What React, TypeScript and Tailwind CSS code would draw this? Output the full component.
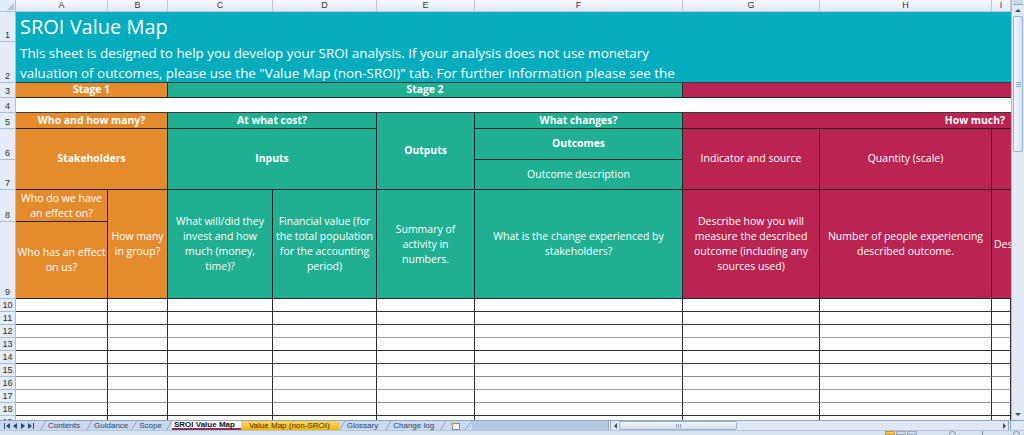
import type { ReactNode } from "react";

const cols = "grid-cols-[16px_92px_60px_105px_104px_98px_208px_137px_172px_19px]";

const orange = "bg-[#e48b2d]";
const green = "bg-[#20af93]";
const red = "bg-[#b92451]";
const teal = "bg-[#03adbd]";

const letters = [
  { l: "A", c: "col-start-2" },
  { l: "B", c: "col-start-3" },
  { l: "C", c: "col-start-4" },
  { l: "D", c: "col-start-5" },
  { l: "E", c: "col-start-6" },
  { l: "F", c: "col-start-7" },
  { l: "G", c: "col-start-8" },
  { l: "H", c: "col-start-9" },
  { l: "I", c: "col-start-10" },
];

const headRows = [
  { n: 1, r: "row-start-2" },
  { n: 2, r: "row-start-3" },
  { n: 3, r: "row-start-4" },
  { n: 4, r: "row-start-5" },
  { n: 5, r: "row-start-6" },
  { n: 6, r: "row-start-7" },
  { n: 7, r: "row-start-8" },
  { n: 8, r: "row-start-9" },
  { n: 9, r: "row-start-10" },
];

// bottom line of each empty row, some print darker than others
const rowLines = [
  "border-b-[#2e2e2e]",
  "border-b-[#3a3a3a]",
  "border-b-[#9c9c9c]",
  "border-b-[#2e2e2e]",
  "border-b-[#3a3a3a]",
  "border-b-[#8f8f8f]",
  "border-b-[#9c9c9c]",
  "border-b-[#8f8f8f]",
  "border-b-[#2e2e2e]",
  "border-b-[#9c9c9c]",
];

function Cell({ className = "", children }: { className?: string; children?: ReactNode }) {
  return (
    <div
      className={`flex items-center justify-center text-center text-white border-r border-b border-[#262626] overflow-hidden whitespace-nowrap ${className}`}
    >
      {children}
    </div>
  );
}

function RowNum({ n, className = "" }: { n: number; className?: string }) {
  return (
    <div
      className={`bg-[#e4ecf7] border-r border-b border-[#a9bdd6] flex items-end justify-center text-[9px] leading-none pb-[1px] text-[#2c2c2c] font-['Liberation_Sans',Arial,sans-serif] ${className}`}
    >
      {n}
    </div>
  );
}

const Sheet = () => {
  return (
    <div className="flex-1 h-full overflow-hidden flex flex-col">
      <div className={`grid ${cols} grid-rows-[12px_30px_41px_15px_15px_16px_31px_30px_32px_77px] shrink-0`}>
        <div className="col-start-1 row-start-1 bg-[#e4ecf7] border-r border-b border-[#a9bdd6] flex items-end justify-end p-[1px]">
          <div className="w-0 h-0 border-l-[7px] border-l-transparent border-b-[7px] border-b-[#b3c3d8]" />
        </div>
        {letters.map((x) => (
          <div
            key={x.l}
            className={`${x.c} row-start-1 bg-linear-to-b from-[#f8fafd] to-[#e2e9f3] border-r border-b border-[#b7c8dc] flex items-center justify-center text-[9px] leading-none text-[#333] font-['Liberation_Sans',Arial,sans-serif]`}
          >
            {x.l}
          </div>
        ))}
        {headRows.map((x) => (
          <RowNum key={x.n} n={x.n} className={`col-start-1 ${x.r}`} />
        ))}

        {/* title band */}
        <div className={`col-start-2 col-span-9 row-start-2 ${teal} text-white text-[20px] leading-[30px] pl-[4px] whitespace-nowrap overflow-hidden`}>
          SROI Value Map
        </div>
        <div className={`col-start-2 col-span-9 row-start-3 ${teal} text-white text-[13.4px] leading-[20px] pl-[4px] pt-px whitespace-nowrap overflow-hidden border-b border-[#2b3f42]`}>
          This sheet is designed to help you develop your SROI analysis. If your analysis does not use monetary
          <br />
          valuation of outcomes, please use the "Value Map (non-SROI)" tab. For further information please see the
        </div>

        {/* stages */}
        <Cell className={`col-start-2 col-span-2 row-start-4 ${orange} text-[10.4px] font-bold`}>Stage 1</Cell>
        <Cell className={`col-start-4 col-span-4 row-start-4 ${green} text-[10.4px] font-bold`}>Stage 2</Cell>
        <Cell className={`col-start-8 col-span-3 row-start-4 ${red} border-r-0`} />
        <div className="col-start-2 col-span-9 row-start-5 bg-white border-b border-[#3a3a3a]" />

        {/* questions */}
        <Cell className={`col-start-2 col-span-2 row-start-6 ${orange} text-[10.4px] font-bold`}>Who and how many?</Cell>
        <Cell className={`col-start-4 col-span-2 row-start-6 ${green} text-[10.4px] font-bold`}>At what cost?</Cell>
        <Cell className={`col-start-6 row-start-6 row-span-3 ${green} text-[10.4px] font-bold`}>Outputs</Cell>
        <Cell className={`col-start-7 row-start-6 ${green} text-[10.4px] font-bold`}>What changes?</Cell>
        <Cell className={`col-start-8 col-span-3 row-start-6 ${red} text-[10.4px] font-bold justify-end pr-[6px] border-r-0`}>How much?</Cell>

        <Cell className={`col-start-2 col-span-2 row-start-7 row-span-2 ${orange} text-[10.4px] font-bold`}>Stakeholders</Cell>
        <Cell className={`col-start-4 col-span-2 row-start-7 row-span-2 ${green} text-[10.4px] font-bold`}>Inputs</Cell>
        <Cell className={`col-start-7 row-start-7 ${green} text-[10.4px] font-bold`}>Outcomes</Cell>
        <Cell className={`col-start-7 row-start-8 ${green} text-[10.5px] text-[#f2f2f2]`}>Outcome description</Cell>
        <Cell className={`col-start-8 row-start-7 row-span-2 ${red} text-[10.5px] text-[#f2f2f2]`}>Indicator and source</Cell>
        <Cell className={`col-start-9 row-start-7 row-span-2 ${red} text-[10.5px] text-[#f2f2f2]`}>Quantity (scale)</Cell>
        <Cell className={`col-start-10 row-start-7 row-span-2 ${red} border-r-0`} />

        {/* descriptions */}
        <Cell className={`col-start-2 row-start-9 ${orange} text-[10.5px] leading-[15px] text-[#f4f4f4]`}>
          Who do we have
          <br />
          an effect on?
        </Cell>
        <Cell className={`col-start-2 row-start-10 ${orange} text-[10.5px] leading-[15px] text-[#f4f4f4]`}>
          Who has an effect
          <br />
          on us?
        </Cell>
        <Cell className={`col-start-3 row-start-9 row-span-2 ${orange} text-[10.5px] leading-[15px] text-[#f4f4f4]`}>
          How many
          <br />
          in group?
        </Cell>
        <Cell className={`col-start-4 row-start-9 row-span-2 ${green} text-[10.5px] leading-[15px] text-[#f4f4f4]`}>
          What will/did they
          <br />
          invest and how
          <br />
          much (money,
          <br />
          time)?
        </Cell>
        <Cell className={`col-start-5 row-start-9 row-span-2 ${green} text-[10.5px] leading-[15px] text-[#f4f4f4]`}>
          Financial value (for
          <br />
          the total population
          <br />
          for the accounting
          <br />
          period)
        </Cell>
        <Cell className={`col-start-6 row-start-9 row-span-2 ${green} text-[10.5px] leading-[15px] text-[#f4f4f4]`}>
          Summary of
          <br />
          activity in
          <br />
          numbers.
        </Cell>
        <Cell className={`col-start-7 row-start-9 row-span-2 ${green} text-[10.5px] leading-[15px] text-[#f4f4f4]`}>
          What is the change experienced by
          <br />
          stakeholders?
        </Cell>
        <Cell className={`col-start-8 row-start-9 row-span-2 ${red} text-[10.5px] leading-[15px] text-[#f4f4f4]`}>
          Describe how you will
          <br />
          measure the described
          <br />
          outcome (including any
          <br />
          sources used)
        </Cell>
        <Cell className={`col-start-9 row-start-9 row-span-2 ${red} text-[10.5px] leading-[15px] text-[#f4f4f4]`}>
          Number of people experiencing
          <br />
          described outcome.
        </Cell>
        <Cell className={`col-start-10 row-start-9 row-span-2 ${red} text-[10.5px] leading-[15px] text-[#f4f4f4] justify-start pl-[2px] border-r-0`}>
          Describe
        </Cell>
      </div>

      {rowLines.map((line, i) => (
        <div key={i} className={`grid ${cols} h-[13px] shrink-0`}>
          <RowNum n={i + 10} />
          {letters.map((x) => (
            <div key={x.l} className={`bg-white border-r border-b border-r-[#2e2e2e] ${line}`} />
          ))}
        </div>
      ))}
    </div>
  );
};

const VScroll = () => (
  <div className="w-[13px] h-full flex flex-col bg-[#e2eaf5] border-l border-[#a7bcd6] shrink-0">
    <div className="h-[5px] mx-[1px] bg-[#cdd9ea] border-b border-[#8aa3c2]" />
    <div className="h-[11px] flex items-center justify-center">
      <div className="w-0 h-0 border-l-[3px] border-r-[3px] border-b-[3px] border-l-transparent border-r-transparent border-b-[#3b4f6b]" />
    </div>
    <div className="h-[136px] mx-[1px] rounded-[2px] border border-[#9cb2ce] bg-linear-to-r from-[#f3f6fb] to-[#d5e1f1] flex flex-col items-center justify-center gap-[1px]">
      <div className="w-[5px] h-px bg-[#8ea4c0]" />
      <div className="w-[5px] h-px bg-[#8ea4c0]" />
      <div className="w-[5px] h-px bg-[#8ea4c0]" />
    </div>
    <div className="flex-1" />
    <div className="h-[11px] flex items-center justify-center">
      <div className="w-0 h-0 border-l-[3px] border-r-[3px] border-t-[3px] border-l-transparent border-r-transparent border-t-[#3b4f6b]" />
    </div>
  </div>
);

const Slash = () => (
  <svg width="6" height="10" viewBox="0 0 6 10" className="shrink-0">
    <line x1="0" y1="10" x2="6" y2="0" stroke="#8ba3c4" strokeWidth="1" />
  </svg>
);

const TabBar = () => (
  <div className="h-[10px] flex items-stretch bg-[#b3c9e6] border-t border-[#8ea7c8] font-['Liberation_Sans',Arial,sans-serif] text-[8px] leading-none text-[#29446c] shrink-0">
    <div className="w-[38px] flex items-center justify-around px-[2px] bg-[#c8d8ee]">
      <svg width="6" height="6" viewBox="0 0 6 6"><rect x="0" y="0" width="1" height="6" fill="#2b4a7a" /><path d="M6 0 L2 3 L6 6 Z" fill="#2b4a7a" /></svg>
      <svg width="4" height="6" viewBox="0 0 4 6"><path d="M4 0 L0 3 L4 6 Z" fill="#2b4a7a" /></svg>
      <svg width="4" height="6" viewBox="0 0 4 6"><path d="M0 0 L4 3 L0 6 Z" fill="#2b4a7a" /></svg>
      <svg width="6" height="6" viewBox="0 0 6 6"><path d="M0 0 L4 3 L0 6 Z" fill="#2b4a7a" /><rect x="5" y="0" width="1" height="6" fill="#2b4a7a" /></svg>
    </div>
    <div className="flex items-stretch bg-[#c9d9ee] pl-[2px]">
      <Slash />
      <div className="flex items-center pl-[2px] pr-[6px]">Contents</div>
      <Slash />
      <div className="flex items-center pl-[2px] pr-[3px]">Guidance</div>
      <Slash />
      <div className="flex items-center pl-[2px] pr-[4px]">Scope</div>
      <Slash />
      <div className="flex items-center bg-white pl-[2px] pr-[6px] font-bold text-[#111] border-b-2 border-[#8c2f63]">SROI Value Map</div>
      <div className="flex items-center bg-linear-to-b from-[#ffd75a] to-[#f3b400] pl-[8px] pr-[9px] text-[#3b3200]">Value Map (non-SROI)</div>
      <Slash />
      <div className="flex items-center pl-[2px] pr-[7px]">Glossary</div>
      <Slash />
      <div className="flex items-center pl-[2px] pr-[6px]">Change log</div>
      <Slash />
      <div className="flex items-center px-[4px]">
        <svg width="10" height="8" viewBox="0 0 10 8">
          <rect x="2.5" y="1.5" width="7" height="6" fill="#fff" stroke="#7a8fae" />
          <circle cx="2.5" cy="1.8" r="1.6" fill="#f0a020" />
        </svg>
      </div>
      <svg width="8" height="10" viewBox="0 0 8 10" className="shrink-0">
        <line x1="0" y1="10" x2="8" y2="0" stroke="#8ba3c4" strokeWidth="1" />
      </svg>
    </div>
    <div className="flex-1" />
    <div className="w-[403px] flex items-stretch bg-[#dfe8f4]">
      <div className="w-[3px] bg-[#f4f7fb] border-x border-[#8ca3c2]" />
      <div className="w-[8px] flex items-center justify-center">
        <div className="w-0 h-0 border-t-[3px] border-b-[3px] border-r-[3px] border-t-transparent border-b-transparent border-r-[#3b4f6b]" />
      </div>
      <div className="w-[118px] rounded-[2px] border border-[#9cb2ce] bg-linear-to-b from-[#f3f6fb] to-[#d3dff0] flex items-center justify-center gap-[1px]">
        <div className="w-px h-[4px] bg-[#8ea4c0]" />
        <div className="w-px h-[4px] bg-[#8ea4c0]" />
        <div className="w-px h-[4px] bg-[#8ea4c0]" />
      </div>
      <div className="flex-1" />
      <div className="w-[8px] flex items-center justify-center">
        <div className="w-0 h-0 border-t-[3px] border-b-[3px] border-l-[3px] border-t-transparent border-b-transparent border-l-[#3b4f6b]" />
      </div>
      <div className="w-[3px] bg-[#f4f7fb] border-x border-[#8ca3c2]" />
    </div>
    <div className="w-[13px] bg-[#dfe8f4]" />
  </div>
);

const StatusBar = () => (
  <div className="h-[5px] flex items-start bg-[#d9e3f0] border-t border-[#b3c4da] shrink-0">
    <div className="flex-1" />
    <div className="flex gap-[1px] mr-[32px]">
      <div className="w-[10px] h-[4px] bg-[#f6c66a] border border-[#c99a3c]" />
      <div className="w-[10px] h-[4px] bg-[#cfd8e4] border border-[#9aa9bd]" />
      <div className="w-[10px] h-[4px] bg-[#cfd8e4] border border-[#9aa9bd]" />
    </div>
    <div className="w-[7px] h-[7px] rounded-full border border-[#7d8ea6] mr-[26px]" />
    <div className="w-px h-[4px] bg-[#7d8ea6] mr-[30px]" />
    <div className="w-[7px] h-[7px] rounded-full border border-[#7d8ea6] mr-[4px]" />
  </div>
);

const App = () => {
  return (
    <div className="w-[1024px] h-[435px] flex flex-col overflow-hidden bg-white font-['Open_Sans',sans-serif]">
      <div className="flex h-[420px] shrink-0">
        <Sheet />
        <VScroll />
      </div>
      <TabBar />
      <StatusBar />
    </div>
  );
};

export default App;
